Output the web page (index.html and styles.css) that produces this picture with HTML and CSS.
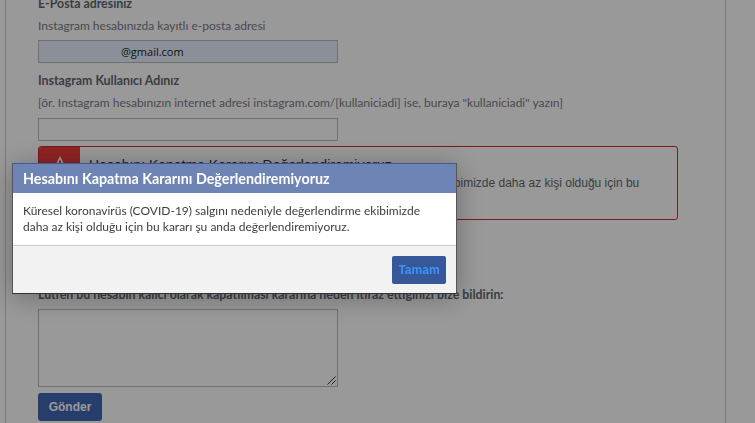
FILE: index.html
```html
<!DOCTYPE html>
<html lang="tr">
<head>
<meta charset="utf-8">
<title>Hesabını Kapatma</title>
<link rel="stylesheet" href="styles.css">
</head>
<body>
<main class="page">
  <form class="form">
    <h3 class="label first">E-Posta adresiniz</h3>
    <p class="hint">Instagram hesabınızda kayıtlı e-posta adresi</p>
    <div class="field filled"><span class="value">@gmail.com</span></div>
    <h3 class="label">Instagram Kullanıcı Adınız</h3>
    <p class="hint">[ör. Instagram hesabınızın internet adresi instagram.com/[kullaniciadi] ise, buraya "kullaniciadi" yazın]</p>
    <div class="field second"></div>
    <section class="alert">
      <div class="alert-icon">
        <svg width="16" height="16" viewBox="0 0 16 16"><path d="M8 1 15 15H1Z" fill="#fff"/><path d="M8 5.5V10" stroke="#f0383e" stroke-width="2" fill="none"/></svg>
      </div>
      <div class="alert-body">
        <h4 class="alert-title">Hesabını Kapatma Kararını Değerlendiremiyoruz</h4>
        <p class="alert-text">Küresel koronavirüs (COVID-19) salgını nedeniyle değerlendirme ekibimizde daha az kişi olduğu için bu kararı şu anda değerlendiremiyoruz.</p>
      </div>
    </section>
    <h3 class="label reason">Lütfen bu hesabın kalıcı olarak kapatılması kararına neden itiraz ettiğinizi bize bildirin:</h3>
    <div class="area">
      <svg class="grip" width="9" height="9" viewBox="0 0 9 9"><path d="M8.5.5 .5 8.5M8.5 4.5 4.5 8.5" stroke="#333" fill="none"/></svg>
    </div>
    <button type="button" class="send">Gönder</button>
  </form>
</main>
<div class="overlay"></div>
<div class="modal">
  <header class="modal-head">Hesabını Kapatma Kararını Değerlendiremiyoruz</header>
  <div class="modal-body">Küresel koronavirüs (COVID-19) salgını nedeniyle değerlendirme ekibimizde daha az kişi olduğu için bu kararı şu anda değerlendiremiyoruz.</div>
  <footer class="modal-foot"><button type="button" class="ok">Tamam</button></footer>
</div>
</body>
</html>
```
FILE: styles.css
```css
* { box-sizing: border-box; }
html, body { margin: 0; height: 100%; overflow: hidden; background: #fff; }
body { font-family: "Lato", "Liberation Sans", sans-serif; color: #4b4f56; }
.page {
  width: 721px;
  height: 423px;
  margin-left: 5px;
  border-left: 1px solid #ccc;
  border-right: 1px solid #ccc;
  overflow: hidden;
}
.form { padding-left: 32px; margin-top: -4px; }
.label { margin: 0; font-size: 12.35px; line-height: 15px; font-weight: 700; color: #606770; }
.hint { margin: 7px 0 0; font-size: 12px; line-height: 15px; color: #777c85; }
.field { width: 300px; height: 23px; margin-top: 7px; border: 1px solid #bbb; background: #fff; }
.field.second { margin-top: 8px; }
.field.filled { background: #e8f0fe; display: flex; align-items: center; padding-left: 82px; }
.value { font: 11px "Open Sans", sans-serif; color: #222; }
.field.filled + .label { margin-top: 10px; }
.alert {
  display: flex;
  width: 640px;
  height: 74px;
  margin-top: 5px;
  border: 1px solid #d42a30;
  border-radius: 3px;
  overflow: hidden;
}
.alert-icon { width: 41px; background: #ee3c3c; display: flex; justify-content: center; padding-top: 8px; }
.alert-body { padding: 9px; font-family: "Liberation Sans", sans-serif; }
.alert-title { margin: 0; font-size: 14px; line-height: 18px; font-weight: 400; color: #333; }
.alert-text { margin: 0; width: 560px; font-size: 12px; line-height: 18px; color: #666; }
.label.reason { margin-top: 67px; }
.area { position: relative; width: 300px; height: 78px; margin-top: 7px; border: 1px solid #bbb; }
.grip { position: absolute; right: 1px; bottom: 1px; }
.send {
  display: block;
  margin-top: 6px;
  width: 64px;
  height: 28px;
  border: 0;
  border-radius: 3px;
  background: #4267b2;
  color: #fff;
  font: 700 12px "Liberation Sans", sans-serif;
}
.overlay { position: fixed; inset: 0; background: rgba(0, 0, 0, .4); }
.modal {
  position: fixed;
  left: 12px;
  top: 163px;
  width: 445px;
  height: 131px;
  display: flex;
  flex-direction: column;
  border: 1px solid #555;
  border-top-color: #3f5a99;
  border-bottom-color: #333;
  box-shadow: 0 3px 26px rgba(0, 0, 0, .3);
  background: #fff;
}
.modal-head {
  height: 29px;
  padding: 0 10px;
  background: #6d84b4;
  color: #fff;
  font-size: 14.3px;
  font-weight: 700;
  line-height: 29px;
}
.modal-body { height: 52px; padding: 10px 10px 0; font-size: 12px; line-height: 16px; color: #3a3d42; }
.modal-foot {
  flex: 1;
  display: flex;
  justify-content: flex-end;
  align-items: center;
  padding-right: 10px;
  background: #f2f2f2;
  border-top: 1px solid #ccc;
}
.ok {
  width: 54px;
  height: 28px;
  border: 0;
  border-radius: 2px;
  background: #365899;
  color: #3d92ff;
  font: 700 12px "Liberation Sans", sans-serif;
}
```
